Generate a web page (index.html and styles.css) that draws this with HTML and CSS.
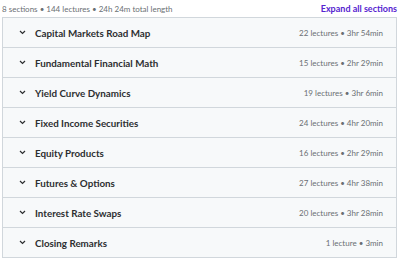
FILE: index.html
```html
<!DOCTYPE html>
<html>
  <head>
    <title>Course content</title>
    <meta name="viewport" content="width=device-width, initial-scale=1" />
    <link rel="stylesheet" href="styles.css">
  </head>
  <body>
    <div class="curriculum">
      <div class="curriculum-header">
        <span class="summary">8 sections • 144 lectures • 24h 24m total length</span>
        <button class="expand-all" type="button">Expand all sections</button>
      </div>

      <div class="sections">
        <div class="section">
          <span class="chevron"><svg width="7" height="5" viewBox="0 0 7 5"><path d="M1 1l2.5 2.5L6 1" fill="none" stroke="#2d2f31" stroke-width="1.2"/></svg></span>
          <span class="section-title">Capital Markets Road Map</span>
          <span class="section-meta">22 lectures • 3hr 54min</span>
        </div>
        <div class="section">
          <span class="chevron"><svg width="7" height="5" viewBox="0 0 7 5"><path d="M1 1l2.5 2.5L6 1" fill="none" stroke="#2d2f31" stroke-width="1.2"/></svg></span>
          <span class="section-title">Fundamental Financial Math</span>
          <span class="section-meta">15 lectures • 2hr 29min</span>
        </div>
        <div class="section">
          <span class="chevron"><svg width="7" height="5" viewBox="0 0 7 5"><path d="M1 1l2.5 2.5L6 1" fill="none" stroke="#2d2f31" stroke-width="1.2"/></svg></span>
          <span class="section-title">Yield Curve Dynamics</span>
          <span class="section-meta">19 lectures • 3hr 6min</span>
        </div>
        <div class="section">
          <span class="chevron"><svg width="7" height="5" viewBox="0 0 7 5"><path d="M1 1l2.5 2.5L6 1" fill="none" stroke="#2d2f31" stroke-width="1.2"/></svg></span>
          <span class="section-title">Fixed Income Securities</span>
          <span class="section-meta">24 lectures • 4hr 20min</span>
        </div>
        <div class="section">
          <span class="chevron"><svg width="7" height="5" viewBox="0 0 7 5"><path d="M1 1l2.5 2.5L6 1" fill="none" stroke="#2d2f31" stroke-width="1.2"/></svg></span>
          <span class="section-title">Equity Products</span>
          <span class="section-meta">16 lectures • 2hr 29min</span>
        </div>
        <div class="section">
          <span class="chevron"><svg width="7" height="5" viewBox="0 0 7 5"><path d="M1 1l2.5 2.5L6 1" fill="none" stroke="#2d2f31" stroke-width="1.2"/></svg></span>
          <span class="section-title">Futures &amp; Options</span>
          <span class="section-meta">27 lectures • 4hr 38min</span>
        </div>
        <div class="section">
          <span class="chevron"><svg width="7" height="5" viewBox="0 0 7 5"><path d="M1 1l2.5 2.5L6 1" fill="none" stroke="#2d2f31" stroke-width="1.2"/></svg></span>
          <span class="section-title">Interest Rate Swaps</span>
          <span class="section-meta">20 lectures • 3hr 28min</span>
        </div>
        <div class="section">
          <span class="chevron"><svg width="7" height="5" viewBox="0 0 7 5"><path d="M1 1l2.5 2.5L6 1" fill="none" stroke="#2d2f31" stroke-width="1.2"/></svg></span>
          <span class="section-title">Closing Remarks</span>
          <span class="section-meta">1 lecture • 3min</span>
        </div>
      </div>
    </div>
  </body>
</html>
```

FILE: styles.css
```css
body {
  margin: 0;
  background-color: #fff;
  font-family: Lato, "Noto Sans", sans-serif;
  color: #2d2f31;
}

.curriculum {
  padding: 0 3px 0 2px;
}

.curriculum-header {
  height: 17px;
  display: flex;
  align-items: center;
  justify-content: space-between;
}

.summary {
  font-size: 8px;
  color: #6a6f73;
}

.expand-all {
  background: none;
  border: none;
  padding: 0;
  font-family: inherit;
  font-size: 9px;
  font-weight: 700;
  color: #5624d0;
  cursor: pointer;
}

.sections {
  border: 1px solid #d1d7dc;
}

.section {
  height: 29px;
  display: flex;
  align-items: center;
  padding: 0 13px 0 16px;
  background-color: #f7f9fa;
  border-bottom: 1px solid #d1d7dc;
}

.section:last-child {
  border-bottom: none;
}

.chevron {
  width: 16px;
  display: flex;
  align-items: center;
}

.section-title {
  flex: 1;
  font-size: 9.8px;
  font-weight: 700;
}

.section-meta {
  font-size: 8px;
  color: #6a6f73;
}
```
